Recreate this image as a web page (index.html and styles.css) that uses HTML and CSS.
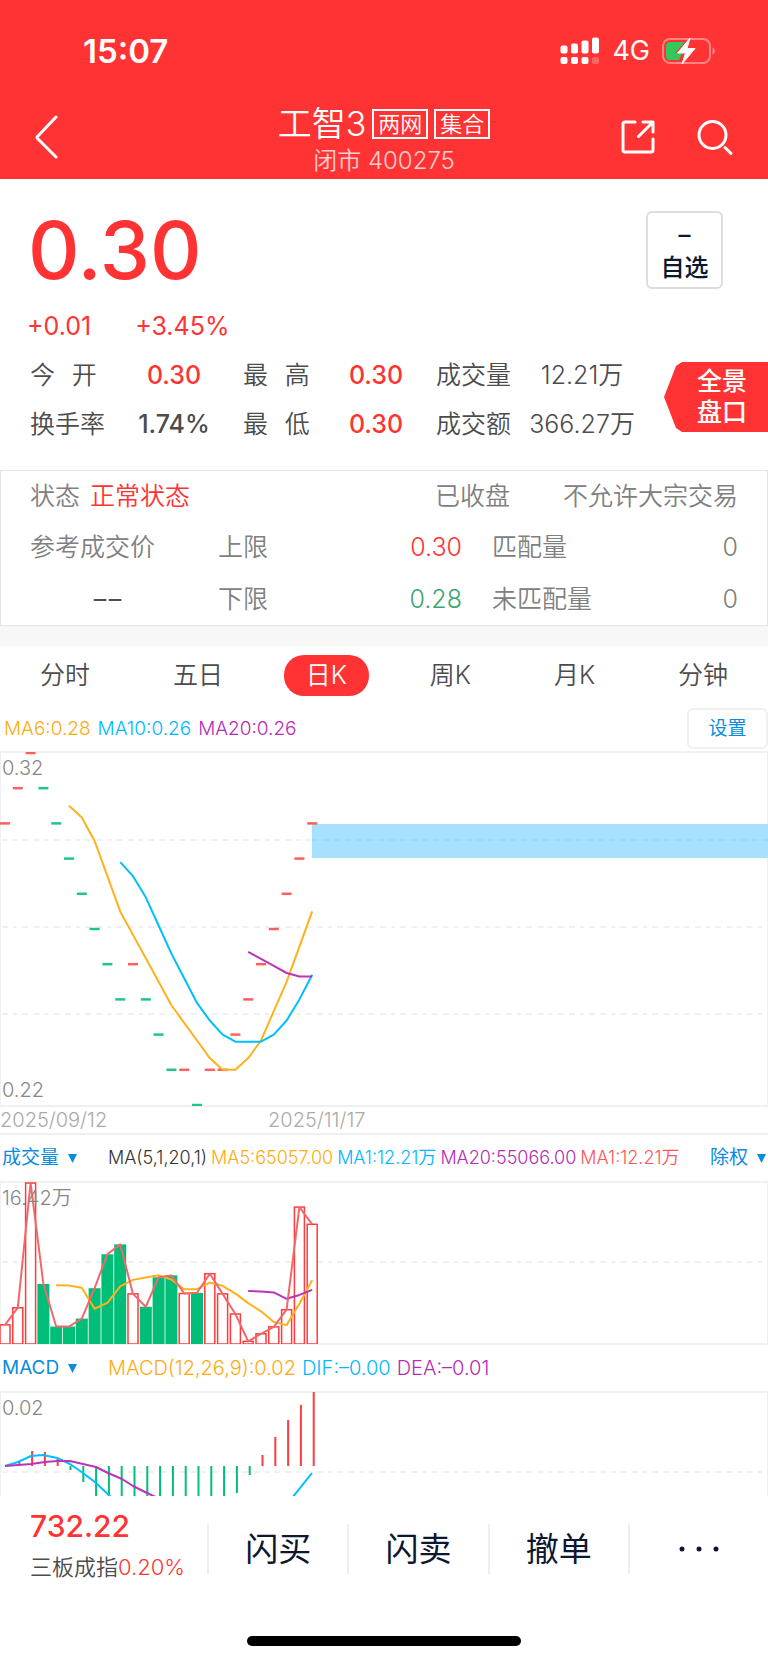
FILE: index.html
```html
<!DOCTYPE html>
<html lang="zh-CN">
<head>
    <meta charset="UTF-8">
    <meta name="viewport" content="width=device-width, initial-scale=1.0">
    <title>工智3 400275</title>
    <link rel="stylesheet" href="styles.css">
</head>
<body>
    <header class="header">
        <!-- Status bar -->
        <div class="status-bar">
            <span class="clock">15:07</span>
            <div class="status-icons">
                <svg class="signal" width="40" height="28" viewBox="0 0 40 28" fill="#fff">
                    <rect x="0.5" y="8.5" width="7" height="8" rx="2"/>
                    <rect x="11" y="6.5" width="7" height="10" rx="2"/>
                    <rect x="21.5" y="3.5" width="7" height="13" rx="2"/>
                    <rect x="32" y="0.5" width="7" height="16" rx="2"/>
                    <rect x="0.5" y="20" width="7" height="7" rx="2"/>
                    <rect x="11" y="20" width="7" height="7" rx="2"/>
                    <rect x="21.5" y="20" width="7" height="7" rx="2"/>
                    <rect x="32" y="20" width="7" height="7" rx="2" opacity="0.25"/>
                </svg>
                <span class="network">4G</span>
                <svg class="battery" width="54" height="28" viewBox="0 0 54 28">
                    <rect x="1" y="2" width="47" height="24" rx="7" fill="none" stroke="#fff" stroke-opacity="0.4" stroke-width="2"/>
                    <path d="M50.5 10.5c3.2 1 3.2 6 0 7z" fill="#fff" fill-opacity="0.4"/>
                    <path d="M8 5h15L13 16h7l-3 7H8a4 4 0 0 1-4-4V9a4 4 0 0 1 4-4z" fill="#34c759"/>
                    <path d="M28 1 15.5 16h8L20 27l13-15.5h-8z" fill="#fff" stroke="#fff" stroke-width="1" stroke-linejoin="round"/>
                </svg>
            </div>
        </div>

        <!-- Title bar -->
        <div class="title-bar">
            <a class="back" href="#" aria-label="返回">
                <svg width="24" height="44" viewBox="0 0 24 44" fill="none" stroke="#fff" stroke-width="3" stroke-linecap="round" stroke-linejoin="round">
                    <path d="M21 2 2.5 21.5a1.5 1.5 0 0 0 0 2L21 42"/>
                </svg>
            </a>
            <div class="stock">
                <h1 class="stock-name">工智3 <span class="tag">两网</span><span class="tag">集合</span></h1>
                <p class="stock-code">闭市 400275</p>
            </div>
            <div class="actions">
                <button type="button" aria-label="分享">
                    <svg width="34" height="34" viewBox="0 0 34 34" fill="none" stroke="#fff" stroke-width="3" stroke-linecap="round" stroke-linejoin="round">
                        <path d="M14 2H4a2 2 0 0 0-2 2v26a2 2 0 0 0 2 2h26a2 2 0 0 0 2-2V19"/>
                        <path d="M22 2h10v10M32 2 17.5 16.5"/>
                    </svg>
                </button>
                <button type="button" aria-label="搜索">
                    <svg width="36" height="36" viewBox="0 0 36 36" fill="none" stroke="#fff" stroke-width="3" stroke-linecap="round">
                        <circle cx="15.5" cy="16" r="13.5"/>
                        <path d="m28 28.5 6 6"/>
                    </svg>
                </button>
            </div>
        </div>
    </header>

    <main>
        <!-- Quote -->
        <section class="quote">
            <div class="quote-top">
                <div class="price">0.30</div>
                <button type="button" class="favorite"><span>–</span><span>自选</span></button>
            </div>
            <div class="change"><span>+0.01</span><span>+3.45%</span></div>
            <div class="quote-bottom">
                <dl class="stats">
                    <dt>今&emsp13;&emsp13;开</dt><dd class="up">0.30</dd>
                    <dt>最&emsp13;&emsp13;高</dt><dd class="up">0.30</dd>
                    <dt>成交量</dt><dd class="plain">12.21万</dd>
                    <dt>换手率</dt><dd>1.74%</dd>
                    <dt>最&emsp13;&emsp13;低</dt><dd class="up">0.30</dd>
                    <dt>成交额</dt><dd class="plain">366.27万</dd>
                </dl>
                <button type="button" class="panorama">全景<br>盘口</button>
            </div>
        </section>

        <!-- Trading state -->
        <section class="state">
            <div class="state-row">
                <span class="state-left"><span>状态</span><span class="up">正常状态</span></span>
                <span class="state-right"><span>已收盘</span><span>不允许大宗交易</span></span>
            </div>
            <div class="state-grid">
                <span>参考成交价</span><span>上限</span><span class="num up">0.30</span><span class="match">匹配量</span><span class="num">0</span>
                <span class="reference">–&hairsp;–</span><span>下限</span><span class="num down">0.28</span><span class="match">未匹配量</span><span class="num">0</span>
            </div>
        </section>

        <!-- Period tabs -->
        <nav class="tabs">
            <button type="button" class="tab">分时</button>
            <button type="button" class="tab">五日</button>
            <button type="button" class="tab active">日K</button>
            <button type="button" class="tab">周K</button>
            <button type="button" class="tab">月K</button>
            <button type="button" class="tab">分钟</button>
        </nav>

        <!-- Daily K chart -->
        <section>
            <div class="legend main-legend">
                <span class="yellow">MA6:0.28</span><span class="blue">MA10:0.26</span><span class="purple">MA20:0.26</span>
                <button type="button" class="settings">设置</button>
            </div>
            <div class="chart">
                <svg id="k-chart" viewBox="0 0 768 354"></svg>
                <span class="axis axis-top">0.32</span>
                <span class="axis axis-bottom">0.22</span>
            </div>
            <div class="dates"><span>2025/09/12</span><span>2025/11/17</span></div>
        </section>

        <!-- Volume chart -->
        <section>
            <div class="legend">
                <label class="picker">
                    <select aria-label="成交量指标"><option>成交量</option></select>
                    <svg width="9" height="9" viewBox="0 0 9 9"><path d="M0 0h9L4.5 9z" fill="#0a8be0"/></svg>
                </label>
                <span class="legend-values small">
                    <span>MA(5,1,20,1)</span><span class="yellow">MA5:65057.00</span><span class="blue">MA1:12.21万</span><span class="purple">MA20:55066.00</span><span class="pink">MA1:12.21万</span>
                </span>
                <label class="picker picker-right">
                    <select aria-label="复权方式"><option>除权</option></select>
                    <svg width="9" height="9" viewBox="0 0 9 9"><path d="M0 0h9L4.5 9z" fill="#0a8be0"/></svg>
                </label>
            </div>
            <div class="chart">
                <svg id="volume-chart" viewBox="0 0 768 162"></svg>
                <span class="axis axis-top">16.42万</span>
            </div>
        </section>

        <!-- MACD chart -->
        <section>
            <div class="legend">
                <label class="picker">
                    <select aria-label="指标"><option>MACD</option></select>
                    <svg width="9" height="9" viewBox="0 0 9 9"><path d="M0 0h9L4.5 9z" fill="#0a8be0"/></svg>
                </label>
                <span class="legend-values">
                    <span class="yellow">MACD(12,26,9):0.02</span><span class="blue">DIF:–0.00</span><span class="purple">DEA:–0.01</span>
                </span>
            </div>
            <div class="chart cut">
                <svg id="macd-chart" viewBox="0 0 768 104"></svg>
                <span class="axis axis-top">0.02</span>
            </div>
        </section>
    </main>

    <footer class="footer">
        <div class="trade-bar">
            <div class="index">
                <div class="index-value">732.22</div>
                <div class="index-name">三板成指<span class="up">0.20%</span></div>
            </div>
            <button type="button">闪买</button>
            <button type="button">闪卖</button>
            <button type="button">撤单</button>
            <button type="button" aria-label="更多">
                <svg width="40" height="6" viewBox="0 0 40 6" fill="#0c1730"><circle cx="3" cy="3" r="2.5"/><circle cx="20" cy="3" r="2.5"/><circle cx="37" cy="3" r="2.5"/></svg>
            </button>
        </div>
        <div class="home-indicator"></div>
    </footer>

    <script src="charts.js"></script>
</body>
</html>
```

FILE: styles.css
```css
* {
    box-sizing: border-box;
}

body {
    margin: 0;
    min-height: 100vh;
    display: flex;
    flex-direction: column;
    background: #fff;
    color: #4c4c4c;
    font-family: Inter, "Noto Sans CJK SC", sans-serif;
    font-size: 25px;
    font-weight: 350;
    line-height: 30px;
}

h1, p, dl, dd {
    margin: 0;
    font-weight: inherit;
}

button, select {
    padding: 0;
    border: none;
    background: none;
    color: inherit;
    font: inherit;
    cursor: pointer;
}

svg {
    display: block;
}

.up {
    color: #ff3333;
}

.down {
    color: #3aa76d;
}

.yellow {
    color: #ffab0f;
}

.blue {
    color: #00b7ff;
}

.purple {
    color: #b52ab5;
}

.pink {
    color: #ff5555;
}

/* Header */
.header {
    padding-bottom: 5px;
    background: #ff3333;
    color: #fff;
}

.status-bar {
    display: flex;
    justify-content: space-between;
    align-items: center;
    height: 97px;
    padding: 5px 52px 0 83px;
}

.clock {
    font-size: 33px;
    font-weight: 600;
}

.status-icons {
    display: flex;
    align-items: center;
    gap: 12px;
}

.network {
    font-size: 27px;
    font-weight: 400;
}

.title-bar {
    display: grid;
    grid-template-columns: 1fr auto 1fr;
    align-items: center;
    height: 77px;
    padding: 0 35px;
}

.stock {
    padding-top: 6px;
}

.stock-name {
    display: flex;
    align-items: center;
    gap: 6px;
    font-size: 34px;
    line-height: 42px;
}

.tag {
    border: 2px solid #fff;
    padding: 0 4px;
    font-size: 22px;
    line-height: 26px;
}

.stock-code {
    text-align: center;
    font-size: 24px;
    line-height: 32px;
    opacity: 0.75;
}

.actions {
    display: flex;
    justify-content: flex-end;
    align-items: center;
    gap: 42px;
}

/* Quote */
.quote {
    padding-bottom: 21px;
}

.quote-top {
    display: flex;
    justify-content: space-between;
    padding: 32px 45px 0 28px;
}

.price {
    color: #ff3333;
    font-size: 80px;
    font-weight: 500;
    line-height: 78px;
}

.favorite {
    display: flex;
    flex-direction: column;
    align-items: center;
    width: 77px;
    height: 78px;
    padding-top: 5px;
    border: 2px solid #ddd;
    border-radius: 6px;
    color: #0c1730;
    font-size: 24px;
    font-weight: 500;
    line-height: 33px;
}

.change {
    display: flex;
    gap: 44px;
    padding: 22px 27px 0;
    color: #ff3333;
    font-weight: 400;
}

.quote-bottom {
    display: flex;
    justify-content: space-between;
    align-items: flex-start;
    margin-top: 10px;
    padding-left: 30px;
}

.stats {
    display: grid;
    grid-template-columns: auto 88px 73px 70px auto 110px;
    align-items: center;
    column-gap: 25px;
    line-height: 49px;
    white-space: nowrap;
}

.stats dd {
    font-weight: 450;
    text-align: center;
}

.stats .plain {
    margin-left: -18px;
    font-weight: 350;
}

.panorama {
    width: 104px;
    height: 70px;
    margin-top: 11px;
    padding-left: 12px;
    background: #ff3333;
    clip-path: polygon(0 50%, 12px 4px, 18px 0, 100% 0, 100% 100%, 18px 100%, 12px 66px);
    color: #fff;
    font-weight: 500;
    line-height: 31px;
}

/* Trading state */
.state {
    border: 1px solid #e5e5e5;
    padding: 0 29px;
    color: #808080;
}

.state-row {
    display: flex;
    justify-content: space-between;
    line-height: 50px;
}

.state-left {
    display: flex;
    gap: 10px;
}

.state-right {
    display: flex;
    gap: 53px;
}

.state-grid {
    display: grid;
    grid-template-columns: 188fr 122fr 122fr 170fr 106fr;
    line-height: 52px;
}

.state-grid .num {
    text-align: right;
}

.state-grid .match {
    padding-left: 30px;
}

.reference {
    padding-right: 33px;
    color: #4c4c4c;
    text-align: center;
    font-weight: 400;
}

/* Period tabs */
.tabs {
    display: flex;
    justify-content: space-between;
    border-top: 20px solid #f7f7f7;
    padding: 9px 18px 12px;
}

.tab {
    padding: 0 22px;
    border-radius: 20px;
    line-height: 41px;
}

.tab.active {
    background: #ff3333;
    color: #fff;
}

/* Charts */
.legend {
    display: flex;
    align-items: center;
    height: 46px;
    padding: 0 2px;
    color: #333;
    font-size: 20px;
}

.main-legend {
    gap: 7px;
    height: 43px;
    padding: 0 0 2px 4px;
    font-size: 19px;
}

.settings {
    align-self: stretch;
    width: 81px;
    margin-left: auto;
    border: 2px solid #f0f0f0;
    border-radius: 6px;
    color: #0a8be0;
    font-weight: 400;
}

.picker {
    display: flex;
    align-items: center;
    gap: 8px;
    width: 106px;
    color: #0a8be0;
    font-size: 19px;
    font-weight: 400;
}

.picker select {
    appearance: none;
    outline: none;
}

.picker-right {
    width: auto;
    margin-left: auto;
}

.legend-values {
    display: flex;
    gap: 6px;
    white-space: nowrap;
}

.small {
    gap: 4px;
    font-size: 18px;
}

.chart {
    position: relative;
    border: 2px solid #f0f0f0;
    border-width: 2px 0;
    box-shadow: inset 1px 0 #f0f0f0, inset -1px 0 #f0f0f0;
}

.chart svg {
    width: 100%;
    margin: -1px 0;
}

.chart.cut {
    border-bottom: none;
}

.chart.cut svg {
    margin-bottom: 0;
}

.axis {
    position: absolute;
    left: 2px;
    color: #888;
    font-size: 20px;
    line-height: 28px;
}

.axis-top {
    top: 1px;
}

.axis-bottom {
    bottom: 1px;
}

.dates {
    display: grid;
    grid-template-columns: 268px 1fr;
    border-bottom: 2px solid #f0f0f0;
    color: #aaa;
    font-size: 20px;
    line-height: 26px;
}

/* Footer */
.footer {
    flex: 1;
    display: flex;
    flex-direction: column;
    justify-content: space-between;
    align-items: center;
    padding: 12px 0 17px;
}

.trade-bar {
    display: flex;
    align-items: center;
    width: 100%;
    color: #0c1730;
}

.index {
    width: 207px;
    padding-left: 30px;
}

.index-value {
    color: #ff3333;
    font-size: 30px;
    font-weight: 500;
    line-height: 36px;
}

.index-name {
    color: #4c4c4c;
    font-size: 22px;
    line-height: 46px;
}

.trade-bar button {
    flex: 1;
    display: flex;
    justify-content: center;
    align-items: center;
    height: 50px;
    border-left: 2px solid #eee;
    font-size: 33px;
    font-weight: 400;
}

.home-indicator {
    width: 274px;
    height: 10px;
    border-radius: 5px;
    background: #000;
}
```

FILE: charts.js
```js
const RED = '#ff3b3b';
const GREEN = '#00be78';
const STEP = 12.8;

const closes = [0.30, 0.31, 0.32, 0.31, 0.30, 0.29, 0.28, 0.27, 0.26, 0.25, 0.26, 0.25, 0.24,
    0.23, 0.23, 0.22, 0.23, 0.23, 0.24, 0.25, 0.26, 0.27, 0.28, 0.29, 0.30];
const falling = [3, 4, 5, 6, 7, 8, 9, 11, 12, 13, 15];
const volumes = [1.95, 3.70, 16.42, 6.12, 1.78, 1.78, 2.59, 5.69, 9.15, 10.16, 5.11, 3.80, 6.80,
    7.00, 5.15, 5.22, 7.17, 5.11, 3.06, 0.27, 1.04, 1.75, 3.50, 13.96, 12.21];
const macd = [0, 4, 15, 14, 7, -4, -16, -32, -45, -52, -56, -58, -58, -56, -52, -48, -42, -34,
    -27, -9, 11, 29, 46, 61, 74];

const centerX = i => 5 + i * STEP;

function line(x1, y1, x2, y2, color, width, extra = '') {
    return `<line x1="${x1}" y1="${y1}" x2="${x2}" y2="${y2}" stroke="${color}" stroke-width="${width}" ${extra}/>`;
}

function grid(y) {
    return line(2, y, 762, y, '#f0f0f0', 2, 'stroke-dasharray="6 5 4 5 6 5.5"');
}

function polyline(points, color) {
    return `<polyline points="${points.map(p => p.join(',')).join(' ')}" fill="none" stroke="${color}" stroke-width="2" stroke-linejoin="round"/>`;
}

// Moving average as chart points
function average(values, size, toY) {
    const points = [];
    for (let i = size - 1; i < values.length; i++) {
        const part = values.slice(i - size + 1, i + 1);
        points.push([centerX(i), toY(part.reduce((a, b) => a + b, 0) / size)]);
    }
    return points;
}

function drawPrice() {
    const toY = price => 1 + (0.32 - price) * 3520;
    let out = grid(88) + grid(175) + grid(262);
    out += '<rect x="312" y="72" width="456" height="34" fill="#a8e1ff"/>';
    out += line(312, 88, 768, 88, '#9ddaf8', 2, 'stroke-dasharray="6 5"');
    closes.forEach((price, i) => {
        const color = falling.includes(i) ? '#1fc48a' : '#ff5f5f';
        out += line(centerX(i) - 5, toY(price), centerX(i) + 5, toY(price), color, 2.5);
    });
    out += polyline(average(closes, 6, toY), '#ffb11b');
    out += polyline(average(closes, 10, toY), '#00bfff');
    out += polyline(average(closes, 20, toY), '#bb33bb');
    document.getElementById('k-chart').innerHTML = out;
}

function drawVolume() {
    const toY = volume => 162 - volume / 16.42 * 161;
    let out = grid(80);
    volumes.forEach((volume, i) => {
        const top = toY(volume);
        if (falling.includes(i)) {
            out += `<rect x="${centerX(i) - 6}" y="${top}" width="12" height="${162 - top}" fill="${GREEN}"/>`;
        } else {
            out += `<rect x="${centerX(i) - 5}" y="${top}" width="10" height="${162 - top}" fill="#fff" stroke="${RED}" stroke-width="1.5"/>`;
        }
    });
    out += polyline(average(volumes, 5, toY), '#ffb11b');
    out += polyline(average(volumes, 20, toY), '#bb33bb');
    out += polyline(average(volumes, 1, toY), '#f0686c');
    document.getElementById('volume-chart').innerHTML = out;
}

function drawMacd() {
    const zero = 74;
    let out = grid(80);
    macd.forEach((value, i) => {
        out += line(centerX(i) + 1.5, zero, centerX(i) + 1.5, zero - value, value > 0 ? RED : GREEN, 2);
    });
    out += polyline([[5, 74], [18, 70], [31, 64], [43, 63], [57, 66], [70, 72], [83, 81], [96, 91], [112, 106]], '#00bfff');
    out += polyline([[292, 106], [312, 81]], '#00bfff');
    out += polyline([[5, 74], [18, 73], [31, 72], [45, 70], [57, 69], [70, 69], [83, 72], [96, 75], [108, 81],
        [122, 87], [133, 94], [147, 101], [158, 106]], '#bb33bb');
    document.getElementById('macd-chart').innerHTML = out;
}

drawPrice();
drawVolume();
drawMacd();
```
